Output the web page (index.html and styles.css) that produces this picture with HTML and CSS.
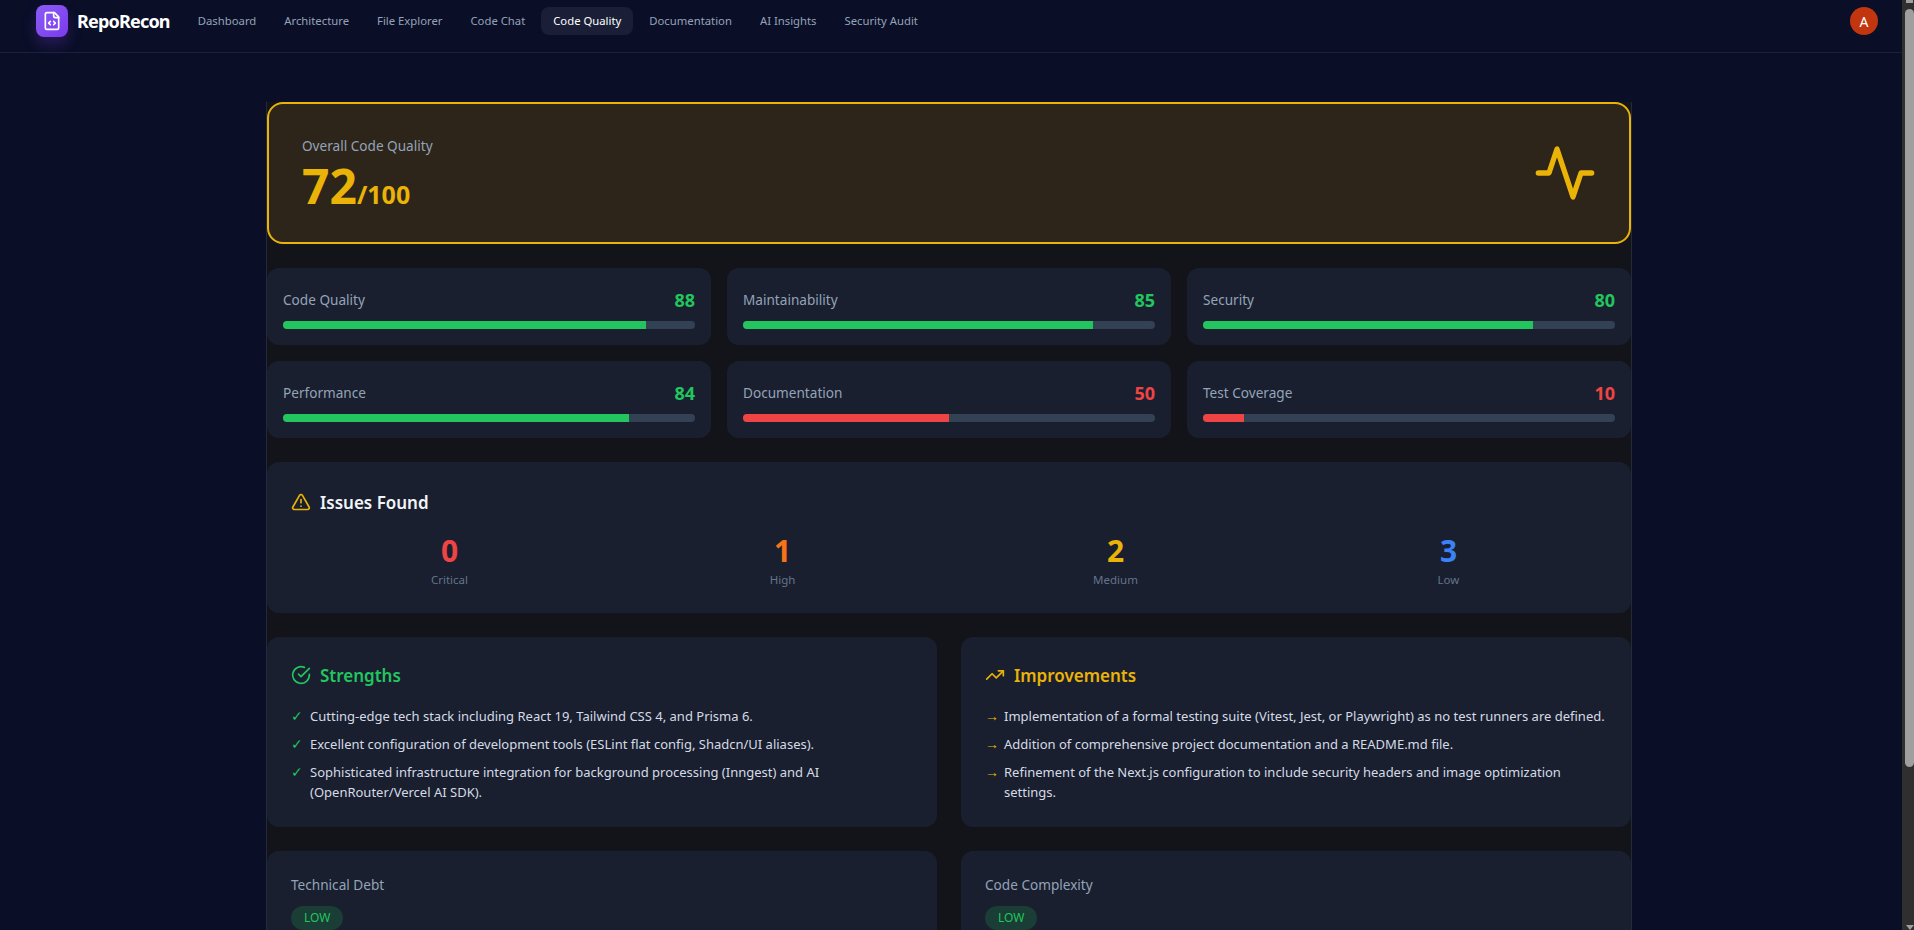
FILE: index.html
```html
<!DOCTYPE html>
<html lang="en">
<head>
<meta charset="utf-8">
<title>RepoRecon - Code Quality</title>
<link rel="stylesheet" href="styles.css">
</head>
<body>
<div class="app">
  <div class="page">
    <header class="nav">
      <div class="logo">
        <svg viewBox="0 0 24 24" width="20" height="20" fill="none" stroke="#fff" stroke-width="2" stroke-linecap="round" stroke-linejoin="round"><path d="M15 2H6a2 2 0 0 0-2 2v16a2 2 0 0 0 2 2h12a2 2 0 0 0 2-2V7z"/><path d="M14 2v4a2 2 0 0 0 2 2h4"/><path d="m10 12.5-2 2 2 2"/><path d="m14 16.5 2-2-2-2"/></svg>
      </div>
      <span class="brand">RepoRecon</span>
      <nav class="links">
        <a class="link">Dashboard</a>
        <a class="link">Architecture</a>
        <a class="link">File Explorer</a>
        <a class="link">Code Chat</a>
        <a class="link active">Code Quality</a>
        <a class="link">Documentation</a>
        <a class="link">AI Insights</a>
        <a class="link">Security Audit</a>
      </nav>
      <div class="avatar">A</div>
    </header>
    <main class="panel">
      <section class="hero">
        <div>
          <div class="hero-label">Overall Code Quality</div>
          <div class="hero-score">72<span class="hero-max">/100</span></div>
        </div>
        <svg class="hero-icon" viewBox="0 0 24 24" width="64" height="64" fill="none" stroke="#eab308" stroke-width="2" stroke-linecap="round" stroke-linejoin="round"><polyline points="22 12 18 12 15 21 9 3 6 12 2 12"/></svg>
      </section>
      <section class="metrics">
        <div class="card metric"><div class="metric-row"><span class="metric-name">Code Quality</span><span class="metric-val green">88</span></div><div class="bar"><div class="fill bg-green" style="width:88%"></div></div></div>
        <div class="card metric"><div class="metric-row"><span class="metric-name">Maintainability</span><span class="metric-val green">85</span></div><div class="bar"><div class="fill bg-green" style="width:85%"></div></div></div>
        <div class="card metric"><div class="metric-row"><span class="metric-name">Security</span><span class="metric-val green">80</span></div><div class="bar"><div class="fill bg-green" style="width:80%"></div></div></div>
        <div class="card metric"><div class="metric-row"><span class="metric-name">Performance</span><span class="metric-val green">84</span></div><div class="bar"><div class="fill bg-green" style="width:84%"></div></div></div>
        <div class="card metric"><div class="metric-row"><span class="metric-name">Documentation</span><span class="metric-val red">50</span></div><div class="bar"><div class="fill bg-red" style="width:50%"></div></div></div>
        <div class="card metric"><div class="metric-row"><span class="metric-name">Test Coverage</span><span class="metric-val red">10</span></div><div class="bar"><div class="fill bg-red" style="width:10%"></div></div></div>
      </section>
      <section class="card block">
        <h2 class="heading white">
          <svg viewBox="0 0 24 24" width="20" height="20" fill="none" stroke="#eab308" stroke-width="2" stroke-linecap="round" stroke-linejoin="round"><path d="m21.73 18-8-14a2 2 0 0 0-3.48 0l-8 14A2 2 0 0 0 4 21h16a2 2 0 0 0 1.73-3"/><path d="M12 9v4"/><path d="M12 17h.01"/></svg>
          Issues Found
        </h2>
        <div class="issues">
          <div class="issue"><div class="issue-num red">0</div><div class="issue-label">Critical</div></div>
          <div class="issue"><div class="issue-num orange">1</div><div class="issue-label">High</div></div>
          <div class="issue"><div class="issue-num yellow">2</div><div class="issue-label">Medium</div></div>
          <div class="issue"><div class="issue-num blue">3</div><div class="issue-label">Low</div></div>
        </div>
      </section>
      <section class="two">
        <div class="card block">
          <h2 class="heading green">
            <svg viewBox="0 0 24 24" width="20" height="20" fill="none" stroke="#22c55e" stroke-width="2" stroke-linecap="round" stroke-linejoin="round"><path d="M22 11.08V12a10 10 0 1 1-5.93-9.14"/><path d="m9 11 3 3L22 4"/></svg>
            Strengths
          </h2>
          <ul class="list">
            <li class="item"><span class="mark green">✓</span><span>Cutting-edge tech stack including React 19, Tailwind CSS 4, and Prisma 6.</span></li>
            <li class="item"><span class="mark green">✓</span><span>Excellent configuration of development tools (ESLint flat config, Shadcn/UI aliases).</span></li>
            <li class="item"><span class="mark green">✓</span><span>Sophisticated infrastructure integration for background processing (Inngest) and AI (OpenRouter/Vercel AI SDK).</span></li>
          </ul>
        </div>
        <div class="card block">
          <h2 class="heading yellow">
            <svg viewBox="0 0 24 24" width="20" height="20" fill="none" stroke="#eab308" stroke-width="2" stroke-linecap="round" stroke-linejoin="round"><polyline points="22 7 13.5 15.5 8.5 10.5 2 17"/><polyline points="16 7 22 7 22 13"/></svg>
            Improvements
          </h2>
          <ul class="list">
            <li class="item"><span class="mark yellow">→</span><span>Implementation of a formal testing suite (Vitest, Jest, or Playwright) as no test runners are defined.</span></li>
            <li class="item"><span class="mark yellow">→</span><span>Addition of comprehensive project documentation and a README.md file.</span></li>
            <li class="item"><span class="mark yellow">→</span><span>Refinement of the Next.js configuration to include security headers and image optimization settings.</span></li>
          </ul>
        </div>
      </section>
      <section class="two">
        <div class="card block">
          <div class="sub">Technical Debt</div>
          <span class="badge">LOW</span>
        </div>
        <div class="card block">
          <div class="sub">Code Complexity</div>
          <span class="badge">LOW</span>
        </div>
      </section>
    </main>
  </div>
  <div class="scrollbar">
    <div class="arrow-up"></div>
    <div class="thumb"></div>
    <div class="arrow-down"></div>
  </div>
</div>
</body>
</html>
```
FILE: styles.css
```css
* { box-sizing: border-box; }
html, body { margin: 0; height: 100%; overflow: hidden; }
body { background: #0a0e27; color: #e2e8f0; font-family: "Noto Sans", "Open Sans", sans-serif; font-size: 14px; }
.app { display: flex; height: 930px; }
.page { flex: 1; min-width: 0; overflow: hidden; }

.scrollbar { width: 12px; background: #2f2f2f; padding-left: 3px; display: flex; flex-direction: column; align-items: center; }
.arrow-up { width: 7px; height: 3px; background: #9f9f9f; }
.thumb { width: 100%; height: 758px; margin-top: 6px; background: #9f9f9f; border-radius: 5px; }
.arrow-down { margin-top: auto; border-left: 4px solid transparent; border-right: 4px solid transparent; border-top: 5px solid #9f9f9f; }

.nav { height: 53px; display: flex; align-items: flex-start; padding: 5px 24px 0 36px; border-bottom: 1px solid #1c2038; }
.logo { width: 32px; height: 32px; border-radius: 8px; background: linear-gradient(135deg, #8b5cf6, #7c3aed); box-shadow: 0 8px 14px rgba(124,58,237,.25); display: flex; align-items: center; justify-content: center; }
.brand { margin-left: 9px; font-size: 18px; font-weight: 700; line-height: 32px; color: #fff; letter-spacing: -.8px; }
.links { display: flex; gap: 4px; margin-left: 16px; margin-top: 2px; }
.link { height: 28px; line-height: 28px; padding: 0 12px; border-radius: 8px; font-size: 11.3px; color: #94a3b8; }
.link.active { background: #1a1f37; color: #fff; }
.avatar { margin-left: auto; margin-top: 2px; width: 28px; height: 28px; border-radius: 50%; background: #c2360f; color: #fff; display: flex; align-items: center; justify-content: center; font-size: 14px; }

.panel { width: 1366px; margin: 49px 0 0 266px; background: #12141a; border-left: 1px solid #232a3a; border-right: 1px solid #232a3a; display: flex; flex-direction: column; }
.hero { height: 142px; border: 2px solid #eab308; border-radius: 16px; background: #2d251a; padding: 32px 32px 32px 33px; display: flex; justify-content: space-between; align-items: center; }
.hero-label { font-size: 13.6px; line-height: 20px; color: #94a3b8; }
.hero-score { margin-top: 4px; margin-bottom: -1px; font-size: 48px; font-weight: 700; line-height: 51px; color: #eab308; }
.hero-max { font-size: 25px; line-height: 1; }

.metrics { display: grid; grid-template-columns: repeat(3, 1fr); gap: 16px; margin-top: 24px; }
.card { background: #191f2e; border-radius: 12px; }
.metric { padding: 17px 16px 16px; height: 77px; }
.metric-row { display: flex; justify-content: space-between; align-items: center; height: 29px; margin-bottom: 7px; }
.metric-name { font-size: 13.6px; color: #94a3b8; }
.metric-val { font-size: 18px; font-weight: 700; }
.bar { height: 8px; border-radius: 4px; background: #334155; overflow: hidden; }
.fill { height: 100%; }

.green { color: #22c55e; }
.red { color: #ef4444; }
.orange { color: #f97316; }
.yellow { color: #eab308; }
.blue { color: #3b82f6; }
.white { color: #f1f5f9; }
.bg-green { background: #22c55e; }
.bg-red { background: #ef4444; }

.block { padding: 24px; }
.panel > .block { margin-top: 24px; height: 151px; }
.panel > .block .heading { margin-top: 1px; margin-bottom: 15px; }
.heading { margin: -1px 0 16px; height: 30px; display: flex; align-items: center; gap: 9px; font-size: 17px; font-weight: 600; }
.issues { display: grid; grid-template-columns: repeat(4, 1fr); gap: 16px; text-align: center; }
.issue-num { margin-top: 1px; font-size: 30px; font-weight: 700; line-height: 36px; }
.issue-label { font-size: 11.5px; line-height: 16px; margin-top: 3px; color: #64748b; }

.two { display: grid; grid-template-columns: 1fr 1fr; gap: 24px; margin-top: 24px; }
.list { list-style: none; margin: 0; padding: 0 0 1px; display: flex; flex-direction: column; gap: 8px; }
.item { display: flex; gap: 8px; font-size: 13px; line-height: 20px; color: #d5dbe6; }
.mark { flex: none; width: 11px; font-size: 14px; }
.sub { font-size: 13.6px; line-height: 20px; color: #94a3b8; margin-bottom: 11px; }
.badge { display: inline-block; height: 24px; padding: 0 13px; border-radius: 12px; background: #1a3d35; color: #22c55e; font-size: 12px; line-height: 24px; }
```
